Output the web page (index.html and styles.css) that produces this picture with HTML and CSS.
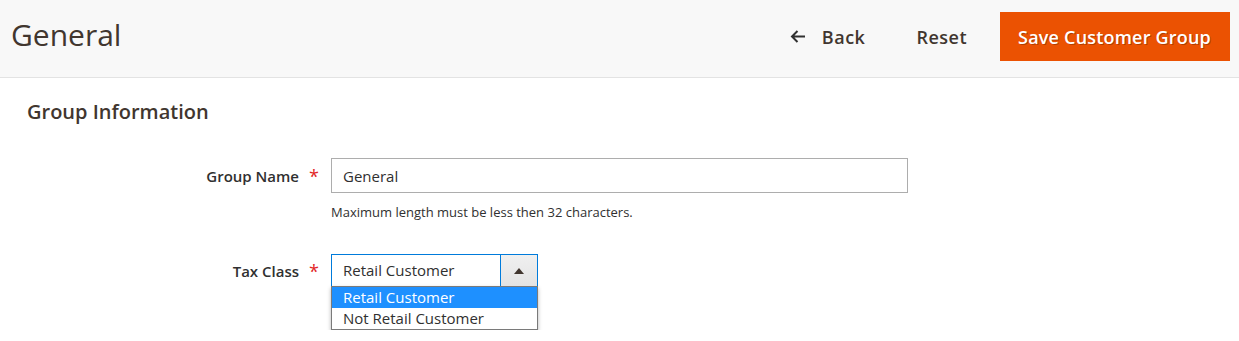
FILE: index.html
```html
<!DOCTYPE html>
<html>
<head>
	<title>General</title>
	<meta charset="UTF-8">
	<link rel="stylesheet" href="styles.css">
</head>
<body>
	<header class="page-header">
		<h1 class="page-title">General</h1>
		<div class="page-actions">
			<button class="action-back" type="button">
				<svg class="back-icon" width="15" height="13" viewBox="0 0 15 13">
					<path d="M15 6.5H2M7.5 1L2 6.5l5.5 5.5" fill="none" stroke="#303030" stroke-width="2"/>
				</svg>
				Back
			</button>
			<button class="action-reset" type="button">Reset</button>
			<button class="action-primary" type="button">Save Customer Group</button>
		</div>
	</header>

	<main class="page-content">
		<h2 class="section-title">Group Information</h2>

		<div class="field">
			<label class="field-label" for="group-name">Group Name</label>
			<span class="required">*</span>
			<div class="field-control">
				<input class="input-text" id="group-name" type="text" value="General">
				<div class="field-note">Maximum length must be less then 32 characters.</div>
			</div>
		</div>

		<div class="field field-tax">
			<label class="field-label">Tax Class</label>
			<span class="required">*</span>
			<div class="field-control">
				<div class="select-box">
					<div class="select-value">Retail Customer</div>
					<div class="select-toggle"><span class="arrow-up"></span></div>
				</div>
				<ul class="select-options">
					<li class="selected">Retail Customer</li>
					<li>Not Retail Customer</li>
				</ul>
			</div>
		</div>
	</main>
</body>
</html>
```

FILE: styles.css
```css
body {
	margin: 0;
	background-color: #ffffff;
	font-family: "Open Sans", "DejaVu Sans", sans-serif;
	font-size: 15px;
	color: #303030;
}

.page-header {
	display: flex;
	align-items: flex-start;
	justify-content: space-between;
	height: 77px;
	padding: 0 9px 0 11px;
	background-color: #f8f8f8;
	border-bottom: 1px solid #e3e3e3;
}

.page-title {
	margin: 0;
	padding-top: 14px;
	font-size: 30px;
	line-height: 42px;
	font-weight: 400;
	color: #41362f;
}

.page-actions {
	display: flex;
	align-items: center;
	padding-top: 12px;
}

.page-actions button {
	font-family: inherit;
	border: 0;
	background: none;
	cursor: pointer;
}

.action-back,
.action-reset {
	display: flex;
	align-items: center;
	font-size: 18px;
	font-weight: 600;
	letter-spacing: 0.5px;
	color: #41362f;
}

.action-back {
	padding: 0;
	margin-right: 51px;
}

.back-icon {
	margin-right: 17px;
}

.action-reset {
	padding: 0;
	margin-right: 33px;
}

.page-actions .action-primary {
	height: 49px;
	padding: 0 19px 0 18px;
	background-color: #eb5202;
	color: #ffffff;
	font-size: 18px;
	letter-spacing: 0.2px;
	font-weight: 600;
	text-shadow: 1px 1px 0 rgba(0, 0, 0, 0.25);
}

.page-content {
	padding: 0 27px;
}

.section-title {
	margin: 0;
	padding: 22px 0 0;
	font-size: 20px;
	font-weight: 600;
	color: #41362f;
	line-height: 24px;
}

.field {
	display: grid;
	grid-template-columns: 272px 32px auto;
	align-items: start;
	margin-top: 34px;
}

.field-tax {
	margin-top: 33px;
}

.field-label {
	text-align: right;
	font-weight: 600;
	line-height: 36px;
}

.field-tax .field-label,
.field-tax .required {
	line-height: 35px;
}

.required {
	color: #e22626;
	font-size: 18px;
	line-height: 36px;
	padding-left: 10px;
}

.input-text {
	box-sizing: border-box;
	width: 577px;
	height: 35px;
	padding: 0 11px;
	border: 1px solid #adadad;
	font-family: inherit;
	font-size: 15px;
	color: #303030;
}

.field-note {
	margin-top: 10px;
	font-size: 13px;
}

.select-box {
	display: flex;
	box-sizing: border-box;
	width: 207px;
	height: 33px;
	border: 1px solid #007bdb;
}

.select-value {
	flex: 1;
	padding-left: 11px;
	line-height: 31px;
}

.select-toggle {
	display: flex;
	align-items: center;
	justify-content: center;
	width: 36px;
	border-left: 1px solid #007bdb;
	background: linear-gradient(#f0f0f0, #e3e3e3);
}

.arrow-up {
	width: 0;
	height: 0;
	border-left: 5px solid transparent;
	border-right: 5px solid transparent;
	border-bottom: 6px solid #41362f;
}

.select-options {
	width: 207px;
	box-sizing: border-box;
	margin: -1px 0 0;
	padding: 0;
	list-style: none;
	background: #ffffff;
	border: 1px solid #7a7a7a;
	box-shadow: 0 2px 4px rgba(0, 0, 0, 0.3);
}

.select-options li {
	height: 21px;
	padding-left: 11px;
	line-height: 21px;
}

.select-options .selected {
	background-color: #1e90ff;
	color: #ffffff;
}
```
